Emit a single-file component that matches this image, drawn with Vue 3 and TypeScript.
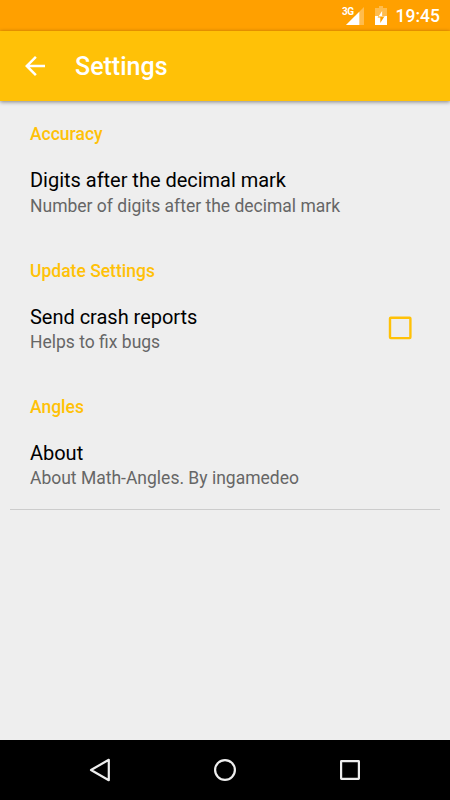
<script setup lang="ts">
interface Preference {
  title: string
  summary: string
  checkbox?: boolean
}

interface Category {
  name: string
  items: Preference[]
}

const categories: Category[] = [
  {
    name: 'Accuracy',
    items: [{ title: 'Digits after the decimal mark', summary: 'Number of digits after the decimal mark' }],
  },
  {
    name: 'Update Settings',
    items: [{ title: 'Send crash reports', summary: 'Helps to fix bugs', checkbox: true }],
  },
  {
    name: 'Angles',
    items: [{ title: 'About', summary: 'About Math-Angles. By ingamedeo' }],
  },
]
</script>

<template>
  <div class="screen">
    <div class="status-bar">
      <svg class="signal" viewBox="0 0 24 20" width="24" height="20">
        <path d="M24 2v18h-18z" fill="#fff" fill-opacity="0.3" />
        <path d="M19.3 6.7v13.3h-13.3z" fill="#fff" />
        <text x="2" y="9.6" class="network">3G</text>
      </svg>
      <svg class="battery" viewBox="0 0 12 19" width="12" height="19">
        <path d="M4 0h4v2h4v8H0V2h4z" fill="#fff" fill-opacity="0.3" />
        <path d="M0 10h12v9H0z" fill="#fff" />
        <path d="M7.2 4.8L2.6 11.6h2.7V17l4.4-7H7.2z" fill="#ffa000" />
        <path d="M7.2 4.8L3.4 10.4h6.1l.2-.4H7.2z" fill="#fff" />
      </svg>
      <span class="clock">19:45</span>
    </div>
    <header class="toolbar">
      <svg class="back" viewBox="0 0 24 24" width="30" height="30">
        <path d="M20 11H7.83l5.59-5.59L12 4l-8 8 8 8 1.41-1.41L7.83 13H20v-2z" fill="#fff" />
      </svg>
      <h1 class="heading">Settings</h1>
    </header>
    <main class="list">
      <section v-for="category in categories" :key="category.name" class="category">
        <h2 class="category-name">{{ category.name }}</h2>
        <div v-for="item in category.items" :key="item.title" class="item">
          <div class="item-text">
            <div class="item-title">{{ item.title }}</div>
            <div class="item-summary">{{ item.summary }}</div>
          </div>
          <svg v-if="item.checkbox" class="checkbox" viewBox="0 0 24 24" width="24" height="24">
            <rect x="2" y="1.7" width="20.4" height="20.4" rx="0.8" />
          </svg>
        </div>
      </section>
    </main>
    <nav class="nav-bar">
      <svg viewBox="0 0 26 26" width="26" height="26">
        <path d="M4 13L21.8 2.8v20.4z" />
      </svg>
      <svg viewBox="0 0 26 26" width="26" height="26">
        <circle cx="13" cy="13" r="9.9" />
      </svg>
      <svg viewBox="0 0 26 26" width="26" height="26">
        <rect x="4.1" y="4.1" width="17.8" height="17.8" rx="0.3" />
      </svg>
    </nav>
  </div>
</template>

<style>
body {
  margin: 0;
  background: #eeeeee;
}
</style>

<style scoped>
.screen {
  display: flex;
  flex-direction: column;
  width: 450px;
  height: 800px;
  overflow: hidden;
  background: #eeeeee;
  font-family: Roboto, sans-serif;
}
.status-bar {
  display: flex;
  flex: none;
  box-sizing: border-box;
  height: 31px;
  padding: 6px 10px 0 0;
  justify-content: flex-end;
  background: #ffa000;
}
.signal {
  margin-right: 11px;
  margin-top: -1px;
  overflow: visible;
}
.network {
  fill: #fff;
  font-size: 10px;
  font-weight: 700;
  letter-spacing: -0.6px;
}
.battery {
  margin-right: 9px;
}
.clock {
  color: #fff;
  font-size: 17.5px;
  font-weight: 500;
  line-height: 21px;
}
.toolbar {
  display: flex;
  flex: none;
  align-items: center;
  box-sizing: border-box;
  height: 70px;
  padding-left: 20px;
  background: #ffc107;
  box-shadow: 0 1px 4px rgba(0, 0, 0, 0.45);
}
.back {
  margin-right: 25px;
}
.heading {
  margin: 2px 0 0;
  color: #fff;
  font-size: 25px;
  font-weight: 500;
  line-height: 30px;
}
.list {
  flex: 1;
  margin: 0 10px;
}
.category {
  box-sizing: border-box;
  height: 136px;
  padding: 22px 20px 0;
}
.category:last-child {
  height: 137px;
  border-bottom: 1px solid #cccccc;
}
.category-name {
  margin: 0;
  color: #ffc107;
  font-size: 17.5px;
  font-weight: 500;
  line-height: 22px;
}
.category:not(:first-child) .category-name {
  padding-top: 1px;
}
.item {
  display: flex;
  align-items: center;
  justify-content: space-between;
  margin-top: 22px;
}
.item-title {
  color: #000;
  font-size: 20px;
  line-height: 26px;
  letter-spacing: -0.02px;
}
.item-summary {
  color: #666;
  font-size: 17.5px;
  line-height: 25px;
}
.category:first-child .item-summary {
  padding-top: 1px;
}
.checkbox {
  margin: -4px 8px 0 0;
  fill: none;
  stroke: #ffc107;
  stroke-width: 2.4;
}
.nav-bar {
  display: flex;
  flex: none;
  align-items: center;
  justify-content: center;
  gap: 99px;
  height: 60px;
  background: #000;
}
.nav-bar svg {
  fill: none;
  stroke: #eee;
  stroke-width: 2.2;
  stroke-linejoin: round;
}
</style>
